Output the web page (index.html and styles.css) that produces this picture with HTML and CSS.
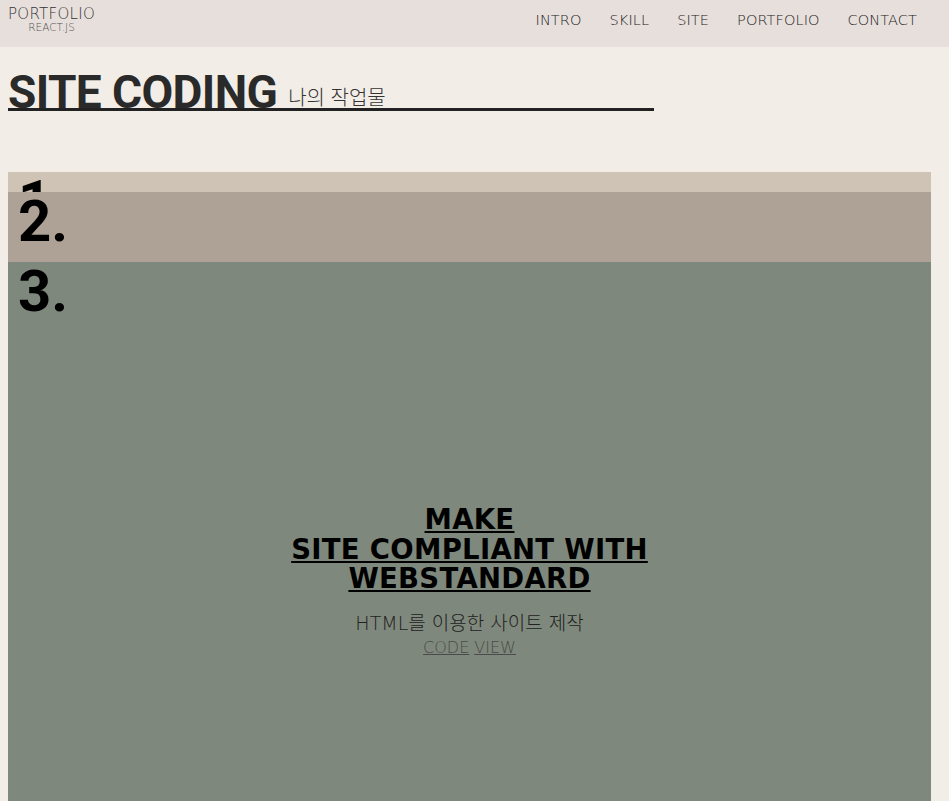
FILE: index.html
```html
<!DOCTYPE html>
<html lang="ko">
<head>
<meta charset="utf-8">
<title>Portfolio</title>
<link rel="stylesheet" href="styles.css">
</head>
<body>
<header class="header">
  <div class="logo">
    <span class="logo-main">PORTFOLIO</span>
    <span class="logo-sub">REACT.JS</span>
  </div>
  <nav class="nav">
    <a href="#">INTRO</a>
    <a href="#">SKILL</a>
    <a href="#">SITE</a>
    <a href="#">PORTFOLIO</a>
    <a href="#">CONTACT</a>
  </nav>
</header>
<main class="main">
  <h2 class="title">SITE CODING <em>나의 작업물</em></h2>
  <div class="sites">
    <article class="site site1"><span class="num">1.</span></article>
    <article class="site site2"><span class="num">2.</span></article>
    <article class="site site3">
      <span class="num">3.</span>
      <div class="site-body">
        <h3 class="site-title"><a href="#">MAKE<br>SITE COMPLIANT WITH<br>WEBSTANDARD</a></h3>
        <p class="site-desc">HTML를 이용한 사이트 제작</p>
        <p class="site-links"><a href="#">CODE</a> <a href="#">VIEW</a></p>
      </div>
    </article>
  </div>
</main>
</body>
</html>
```
FILE: styles.css
```css
html, body {
  margin: 0;
  padding: 0;
}
body {
  background: #f2ede7;
  font-family: "DejaVu Sans", sans-serif;
  color: #222;
  overflow: hidden;
  height: 801px;
}
a { color: inherit; }
.header {
  height: 47px;
  background: #e7dfdb;
  display: flex;
  justify-content: space-between;
  align-items: flex-start;
  padding: 0 32px 0 8px;
}
.logo {
  display: flex;
  flex-direction: column;
  align-items: center;
  padding-top: 7px;
  color: #333;
}
.logo-main {
  font-size: 15px;
  line-height: 15px;
  font-weight: 300;
  letter-spacing: 0.3px;
}
.logo-sub {
  font-size: 10.5px;
  line-height: 10px;
  font-weight: 300;
  color: #555;
}
.nav {
  display: flex;
  gap: 28px;
  padding-top: 12px;
}
.nav a {
  text-decoration: none;
  font-size: 14.5px;
  line-height: 16px;
  font-weight: 300;
  letter-spacing: 0.1px;
  color: #222;
}
.main {
  padding: 0 18px 0 8px;
}
.title {
  width: 70%;
  margin: 29px 0 61px;
  border-bottom: 3px solid #222;
  font-family: Roboto, sans-serif;
  font-weight: 700;
  font-size: 46px;
  line-height: 32px;
  letter-spacing: -0.6px;
  color: #2a2a2a;
}
.title em {
  font-style: normal;
  font-weight: 300;
  font-size: 20px;
  line-height: 0;
  vertical-align: 3px;
  letter-spacing: 0;
  font-family: "Noto Sans CJK KR", sans-serif;
  color: #333;
}
.sites {
  display: flex;
  flex-direction: column;
}
.site {
  position: relative;
  overflow: hidden;
  padding-left: 10px;
}
.num {
  display: block;
  font-family: Roboto, sans-serif;
  font-weight: 700;
  font-size: 58px;
  line-height: 1;
  color: #000;
}
.site1 { background: #cfc3b5; height: 20px; }
.site2 { background: #ada295; height: 70px; }
.site3 {
  background: #7f887c;
  height: 640px;
  display: flex;
  flex-direction: column;
}
.site-body {
  text-align: center;
  margin-top: 185px;
  padding-right: 10px;
}
.site-title {
  margin: 0;
  font-family: "DejaVu Sans", sans-serif;
  font-weight: 700;
  font-size: 27.5px;
  line-height: 29.5px;
  letter-spacing: 0.3px;
  color: #000;
}
.site-desc {
  margin: 17px 0 0;
  font-family: "DejaVu Sans", "Noto Sans CJK KR", sans-serif;
  font-weight: 300;
  font-size: 19px;
  line-height: 24px;
  color: #222;
}
.site-links {
  margin: 3px 0 0;
  font-size: 16px;
  font-weight: 300;
  line-height: 20px;
  color: #4a4a4a;
}
```
